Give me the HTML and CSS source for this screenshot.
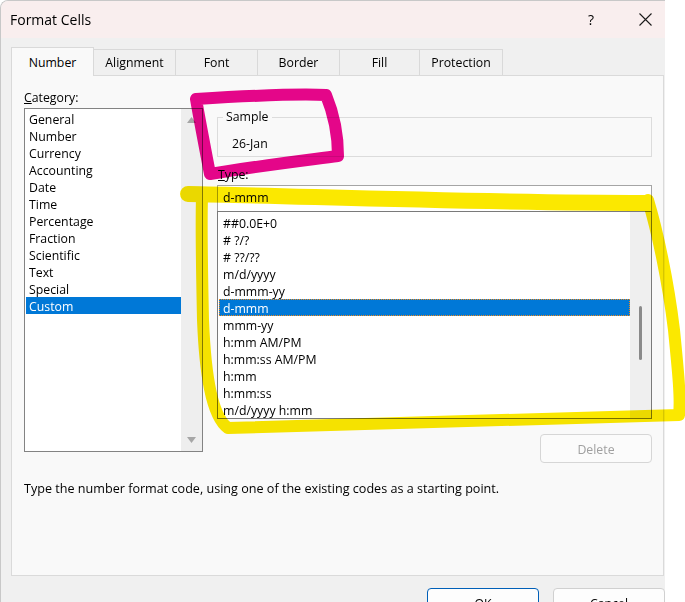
FILE: index.html
```html
<!DOCTYPE html>
<html>
<head>
<meta charset="utf-8">
<link rel="stylesheet" href="styles.css">
</head>
<body>
<div class="dialog">
  <div class="titlebar">
    <span class="title">Format Cells</span>
    <span class="help">?</span>
    <svg class="close" width="13" height="13" viewBox="0 0 13 13"><path d="M0.5 0.5 L12.5 12.5 M12.5 0.5 L0.5 12.5" stroke="#1b1b1b" stroke-width="1.1" fill="none"/></svg>
  </div>
  <div class="tabs">
    <div class="tab selected">Number</div>
    <div class="tab">Alignment</div>
    <div class="tab">Font</div>
    <div class="tab">Border</div>
    <div class="tab narrow">Fill</div>
    <div class="tab wide">Protection</div>
  </div>
  <div class="panel">
    <div class="cols">
      <div class="leftcol">
        <div class="label"><u>C</u>ategory:</div>
        <div class="listbox catlist">
          <ul class="items">
            <li>General</li>
            <li>Number</li>
            <li>Currency</li>
            <li>Accounting</li>
            <li>Date</li>
            <li>Time</li>
            <li>Percentage</li>
            <li>Fraction</li>
            <li>Scientific</li>
            <li>Text</li>
            <li>Special</li>
            <li class="sel">Custom</li>
          </ul>
          <div class="vscroll arrows">
            <svg width="9" height="6" viewBox="0 0 9 6"><polygon points="4.5,0 9,6 0,6" fill="#a6a6a6"/></svg>
            <svg width="9" height="6" viewBox="0 0 9 6"><polygon points="0,0 9,0 4.5,6" fill="#a6a6a6"/></svg>
          </div>
        </div>
      </div>
      <div class="rightcol">
        <fieldset class="sample">
          <legend>Sample</legend>
          <div class="sample-val">26-Jan</div>
        </fieldset>
        <div class="label typelabel"><u>T</u>ype:</div>
        <div class="typeinput">d-mmm</div>
        <div class="listbox typelist">
          <ul class="items">
            <li>##0.0E+0</li>
            <li># ?/?</li>
            <li># ??/??</li>
            <li>m/d/yyyy</li>
            <li>d-mmm-yy</li>
            <li class="sel focus">d-mmm</li>
            <li>mmm-yy</li>
            <li>h:mm AM/PM</li>
            <li>h:mm:ss AM/PM</li>
            <li>h:mm</li>
            <li>h:mm:ss</li>
            <li>m/d/yyyy h:mm</li>
          </ul>
          <div class="vscroll">
            <div class="thumb" style="margin-top:94px;height:54px"></div>
          </div>
        </div>
        <div class="btnrow">
          <button class="btn disabled">Delete</button>
        </div>
      </div>
    </div>
    <p class="desc">Type the number format code, using one of the existing codes as a starting point.</p>
  </div>
  <div class="footer">
    <button class="btn primary">OK</button>
    <button class="btn">Cancel</button>
  </div>
</div>
<svg class="annot" width="685" height="602" viewBox="0 0 685 602">
  <path d="M196 99 C245 96 295 93 326 95 C333 112 338 135 338 156 C300 161 250 167 210 174 C205 148 200 122 196 99 Z" fill="none" stroke="#ea068c" stroke-width="12" stroke-linejoin="round" stroke-linecap="round"/>
  <path d="M188 194 C300 196 480 203 646 203" fill="none" stroke="#fbe800" stroke-width="16" stroke-linecap="round"/>
  <path d="M648 200 C657 230 668 280 674 330 C678 370 681 400 679 415 C560 418 400 424 228 428 C211 416 205 370 203 320 C202 270 201 230 202 198" fill="none" stroke="#fbe800" stroke-width="12" stroke-linejoin="round" stroke-linecap="round"/>
</svg>
</body>
</html>
```

FILE: styles.css
```css
* { box-sizing: border-box; }
html, body { margin: 0; padding: 0; background: #ffffff; }
body {
  position: relative;
  width: 685px;
  height: 602px;
  overflow: hidden;
  font-family: "Segoe UI", "Open Sans", sans-serif;
  font-size: 12.3px;
  color: #000;
}
.dialog {
  width: 665px;
  height: 602px;
  background: #f0f0f0;
  border-top: 1px solid #c8c8c8;
  border-left: 1px solid #c8c8c8;
  border-top-left-radius: 8px;
  overflow: hidden;
}
.titlebar {
  height: 37px;
  background: #f9eeee;
  display: flex;
  align-items: center;
  padding-left: 9px;
}
.title { font-size: 14px; flex: 1; }
.help { font-size: 14px; margin-right: 45px; }
.close { margin-right: 13px; display: block; }

.tabs {
  height: 37px;
  display: flex;
  align-items: flex-end;
  padding-left: 10px;
}
.tab {
  width: 83px;
  height: 26px;
  margin-right: -1px;
  border: 1px solid #d9d9d9;
  border-bottom: none;
  background: #f0f0f0;
  display: flex;
  align-items: center;
  justify-content: center;
}
.tab.narrow { width: 81px; }
.tab.wide { width: 84px; }
.tab.selected {
  height: 29px;
  margin-bottom: -1px;
  background: #f9f9f9;
  position: relative;
  z-index: 1;
}

.panel {
  margin-left: 10px;
  width: 653px;
  height: 501px;
  border: 1px solid #dadada;
  background: #f9f9f9;
  padding: 12px 11px 0 12px;
}
.cols { display: flex; gap: 14px; }
.leftcol { width: 179px; }
.rightcol { flex: 1; margin-top: 20px; }
.label { line-height: 17px; height: 17px; padding-top: 1px; }
.leftcol .label { margin-bottom: 3px; }

.listbox {
  display: flex;
  background: #fff;
  border: 1px solid #7f7f7f;
}
.items {
  list-style: none;
  margin: 0;
  flex: 1;
  overflow: hidden;
}
.items li {
  height: 17px;
  padding-top: 1px;
  line-height: 17px;
  white-space: nowrap;
}
.catlist { height: 344px; border-color: #838383; }
.catlist .items { padding: 1px 0 0 1px; }
.catlist .items li { padding-left: 3px; }
.typelist .items { padding: 2px 0 0 1px; }
.typelist .items li { padding-left: 4px; }
.items li.sel { background: #0078d7; color: #fff; }
.items li.focus { outline: 1px dotted #f08a1c; outline-offset: -1px; }

.vscroll {
  width: 21px;
  background: #eeeeee;
  display: flex;
  flex-direction: column;
  align-items: center;
}
.vscroll.arrows { justify-content: space-between; padding: 8px 0 8px; }
.vscroll svg { display: block; }
.thumb { width: 3px; border-radius: 2px; background: #8a8a8a; }

.sample {
  margin: 0;
  padding: 0;
  min-width: 0;
  border: 1px solid #dcdcdc;
}
.sample legend {
  margin-left: 5px;
  padding: 0 3px;
  line-height: 18px;
}
.sample-val { padding: 9px 0 4px 14px; line-height: 17px; }
.typelabel { margin-top: 8px; padding-left: 1px; }
.typeinput {
  margin-top: 3px;
  height: 27px;
  border: 1px solid #a5a5a5;
  background: #fff;
  padding-left: 5px;
  line-height: 23px;
}
.typelist { height: 208px; margin-top: -1px; border-color: #7a7a7a; }
.typelist .vscroll { background: #efefef; }

.btnrow { display: flex; justify-content: flex-end; margin-top: 15px; }
.btn {
  width: 112px;
  height: 29px;
  border: 1px solid #d0d0d0;
  border-radius: 4px;
  background: #fdfdfd;
  font-family: inherit;
  font-size: 12.3px;
  color: #000;
  padding: 1px 0 0;
}
.btn.disabled { color: #a0a0a0; background: #fbfbfb; border-color: #d6d6d6; }
.btn.primary { border-color: #005fb8; }

.desc { margin: 17px 0 0; line-height: 17px; font-size: 12.6px; }

.footer {
  display: flex;
  justify-content: flex-end;
  gap: 14px;
  padding-top: 12px;
}

.annot {
  position: absolute;
  left: 0;
  top: 0;
  pointer-events: none;
  mix-blend-mode: multiply;
}
```
